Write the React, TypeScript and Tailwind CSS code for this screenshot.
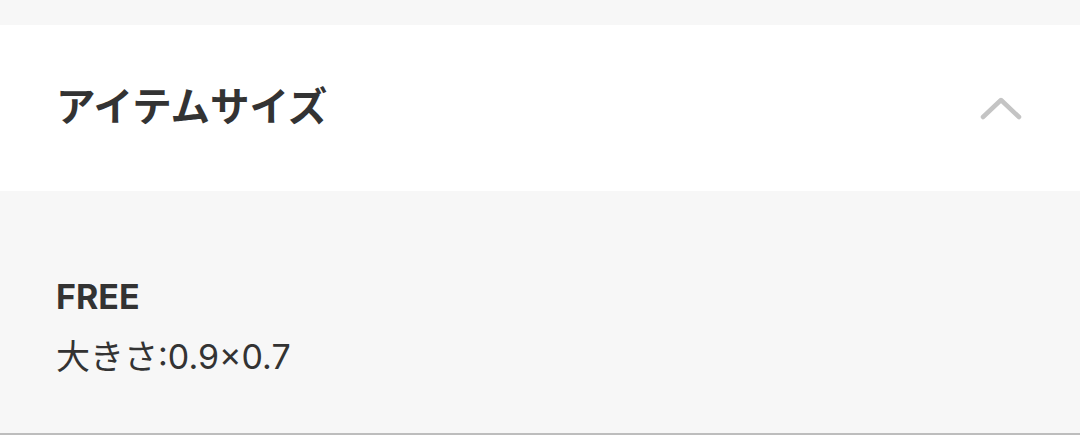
export default function App() {
  return (
    <div
      className="w-[1080px] h-[435px] bg-[#f7f7f7] flex flex-col text-[#333333]"
      style={{ fontFamily: 'Inter, "Noto Sans CJK JP", sans-serif' }}
    >
      <div className="h-[25px] shrink-0" />
      <div className="h-[166px] shrink-0 bg-white flex items-center justify-between pl-[56px] pr-[58px]">
        <h2 className="text-[39.5px] font-bold leading-none">アイテムサイズ</h2>
        <svg width="42" height="24" viewBox="0 0 42 24" fill="none">
          <path
            d="M3 21 L21 4 L39 21"
            stroke="#c4c4c4"
            strokeWidth="4.5"
            strokeLinecap="round"
            strokeLinejoin="round"
          />
        </svg>
      </div>
      <div className="flex-1 pl-[56px] pt-[81px]">
        <p className="text-[34px] font-bold leading-[50px]">FREE</p>
        <p className="text-[34px] leading-[50px] mt-[10px]">大きさ:0.9×0.7</p>
      </div>
      <div className="h-[2px] shrink-0 bg-[#bdbdbd]" />
    </div>
  );
}
